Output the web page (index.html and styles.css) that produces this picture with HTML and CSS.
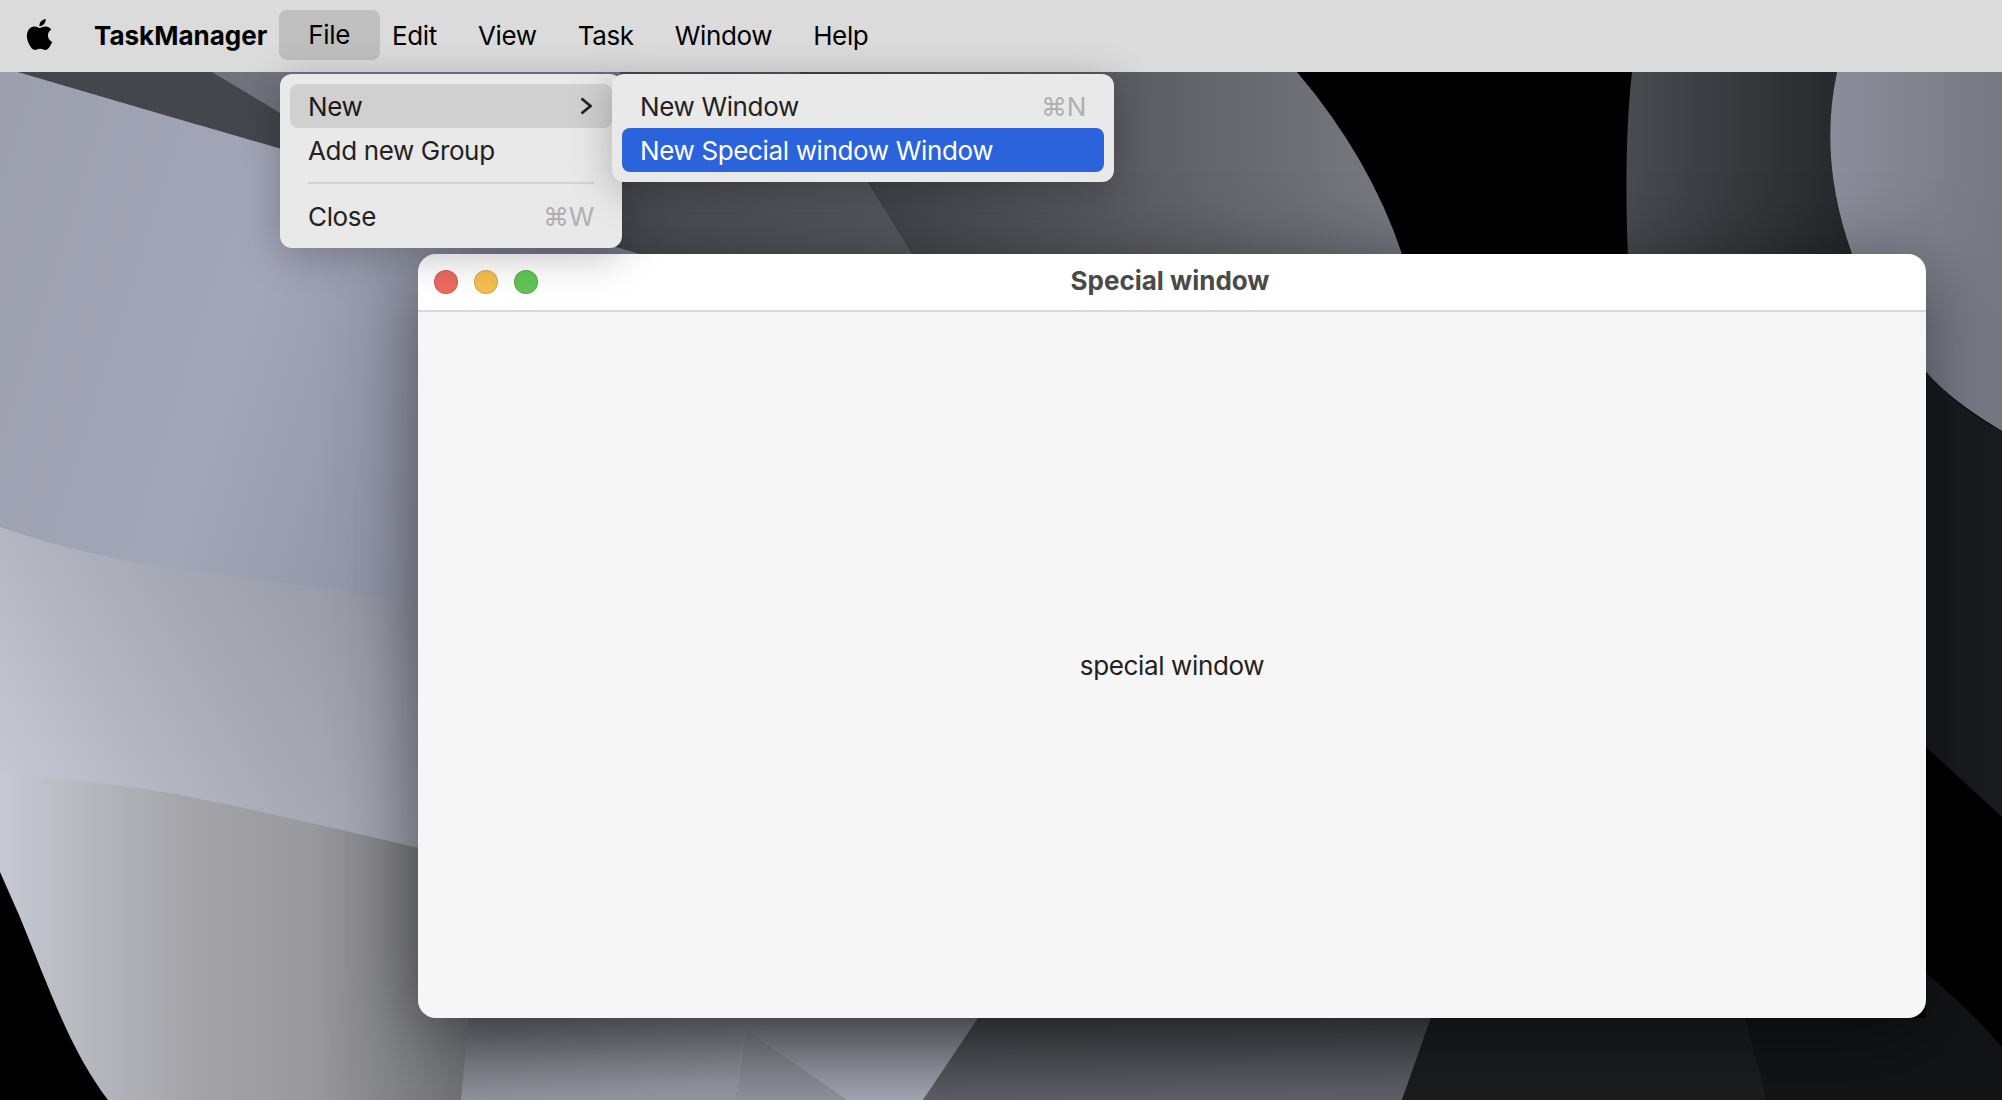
FILE: index.html
```html
<!DOCTYPE html>
<html lang="en">
  <head>
    <meta charset="UTF-8">
    <meta name="viewport" content="width=device-width, initial-scale=1.0">
    <title>TaskManager</title>
    <link rel="stylesheet" href="styles.css">
  </head>
  <body>
    <header class="menu-bar">
      <svg class="apple-logo" viewBox="0 0 24 24"><path d="M12.152 6.896c-.948 0-2.415-1.078-3.96-1.04-2.04.027-3.91 1.183-4.961 3.014-2.117 3.675-.546 9.103 1.519 12.09 1.013 1.454 2.208 3.09 3.792 3.039 1.52-.065 2.09-.987 3.935-.987 1.831 0 2.35.987 3.96.948 1.637-.026 2.676-1.48 3.676-2.948 1.156-1.688 1.636-3.325 1.662-3.415-.039-.013-3.182-1.221-3.22-4.857-.026-3.04 2.48-4.494 2.597-4.559-1.429-2.09-3.623-2.324-4.39-2.376-2-.156-3.675 1.09-4.61 1.09zM15.53 3.83c.843-1.012 1.4-2.427 1.245-3.83-1.207.052-2.662.805-3.532 1.818-.78.896-1.454 2.338-1.273 3.714 1.338.104 2.715-.688 3.559-1.701"/></svg>
      <span class="app-name">TaskManager</span>
      <span class="menu-title menu-title-open">File</span>
      <span class="menu-title">Edit</span>
      <span class="menu-title">View</span>
      <span class="menu-title">Task</span>
      <span class="menu-title">Window</span>
      <span class="menu-title">Help</span>
    </header>

    <main class="desktop">
      <!-- wallpaper -->
      <svg class="wallpaper" viewBox="0 72 2002 1028" preserveAspectRatio="none">
        <defs>
          <linearGradient id="leftTop" x1="0" y1="0" x2="1" y2="0.3">
            <stop offset="0" stop-color="#9d9fae"/>
            <stop offset="0.45" stop-color="#a3a6b7"/>
            <stop offset="1" stop-color="#85879a"/>
          </linearGradient>
          <linearGradient id="leftMid" x1="0" y1="0.7" x2="1" y2="0.4">
            <stop offset="0" stop-color="#c4c7d2"/>
            <stop offset="0.3" stop-color="#acaeba"/>
            <stop offset="0.6" stop-color="#9a9ca8"/>
            <stop offset="1" stop-color="#747680"/>
          </linearGradient>
          <linearGradient id="leftLow" x1="0" y1="0" x2="1" y2="0">
            <stop offset="0" stop-color="#c6c9d3"/>
            <stop offset="0.4" stop-color="#a4a4a8"/>
            <stop offset="0.64" stop-color="#9a9a9e"/>
            <stop offset="1" stop-color="#6c6d71"/>
          </linearGradient>
          <linearGradient id="upperA" x1="0" y1="0" x2="1" y2="0">
            <stop offset="0" stop-color="#4a4b52"/>
            <stop offset="1" stop-color="#5a5b61"/>
          </linearGradient>
          <linearGradient id="upperB" x1="0" y1="0" x2="1" y2="0">
            <stop offset="0" stop-color="#3c3d42"/>
            <stop offset="1" stop-color="#626368"/>
          </linearGradient>
          <linearGradient id="upperC" x1="0" y1="0" x2="1" y2="0">
            <stop offset="0" stop-color="#626368"/>
            <stop offset="1" stop-color="#7a7c85"/>
          </linearGradient>
          <linearGradient id="upperD" x1="0" y1="0" x2="1" y2="0">
            <stop offset="0" stop-color="#4a4b50"/>
            <stop offset="1" stop-color="#1e1f22"/>
          </linearGradient>
          <linearGradient id="upperE" x1="0" y1="0" x2="1" y2="0">
            <stop offset="0" stop-color="#8b8d9a"/>
            <stop offset="1" stop-color="#767883"/>
          </linearGradient>
          <linearGradient id="lowerA" x1="0" y1="0" x2="0.2" y2="1">
            <stop offset="0.18" stop-color="#66676d"/>
            <stop offset="1" stop-color="#92949f"/>
          </linearGradient>
          <linearGradient id="lowerLight" x1="0" y1="0" x2="0" y2="1">
            <stop offset="0.18" stop-color="#707178"/>
            <stop offset="1" stop-color="#a3a6b3"/>
          </linearGradient>
          <linearGradient id="lowerWedge" x1="0" y1="0" x2="0" y2="1">
            <stop offset="0" stop-color="#74757d"/>
            <stop offset="1" stop-color="#8f919c"/>
          </linearGradient>
          <linearGradient id="lowerB" x1="0" y1="0" x2="0.1" y2="1">
            <stop offset="0.18" stop-color="#3c3d41"/>
            <stop offset="1" stop-color="#5e5f66"/>
          </linearGradient>
        </defs>

        <rect x="0" y="72" width="2002" height="1028" fill="#000"/>
        <rect x="200" y="72" width="460" height="200" fill="#70727e"/>
        <path d="M18 72 L212 72 L300 125 L660 72 L660 260 Z" fill="#45464d"/>
        <path d="M620 72 H800 L913 254 L940 300 H620 Z" fill="url(#upperA)"/>
        <path d="M800 72 H1188 V300 H940 L913 254 Z" fill="url(#upperB)"/>
        <path d="M1188 72 H1297 Q1370 158 1402 254 L1420 300 H1188 Z" fill="url(#upperC)"/>
        <path d="M1632 72 Q1622 160 1630 300 H1900 L1852 254 Q1818 160 1837 72 Z" fill="url(#upperD)"/>
        <path d="M1837 72 H2002 V431 Q1950 400 1926 372 L1852 254 Q1818 160 1837 72 Z" fill="url(#upperE)"/>
        <path d="M1926 372 Q1960 410 2002 431 V817 L1926 747 Z" fill="#1a1b1e"/>
        <path d="M1926 973 Q1970 1010 2002 1047 V1100 H1767 L1741 1018 H1926 Z" fill="#131416"/>

        <path d="M0 72 H18 L660 260 V700 H0 Z" fill="url(#leftTop)"/>
        <path d="M0 527 C60 548 120 560 172 569 C260 578 340 590 660 640 V860 H0 Z" fill="url(#leftMid)"/>
        <path d="M0 773 C60 778 130 785 191 797 C280 815 340 830 480 862 V1100 H108 C70 1050 50 990 19 915 L0 872 Z" fill="url(#leftLow)"/>

        <path d="M470 1000 H748 L736 1100 H461 Z" fill="url(#lowerA)"/>
        <path d="M746 1000 H1000 L923 1100 H736 Z" fill="url(#lowerLight)"/>
        <path d="M736 1100 L746 1030 L847 1100 Z" fill="url(#lowerWedge)"/>
        <path d="M990 1000 H1440 L1402 1100 H923 Z" fill="url(#lowerB)"/>
        <path d="M1437 1000 H1740 L1767 1100 H1402 Z" fill="#1b1c1e"/>
      </svg>

      <section class="window">
        <div class="window-titlebar">
          <span class="light light-red"></span>
          <span class="light light-yellow"></span>
          <span class="light light-green"></span>
          <span class="window-title">Special window</span>
        </div>
        <div class="window-body">special window</div>
      </section>
    </main>

    <div class="menu menu-file">
      <div class="menu-row menu-row-open"><span>New</span>
        <svg class="chevron" viewBox="0 0 12 18"><path d="M1.5 1.5 L10.5 9 L1.5 16.5"/></svg>
      </div>
      <div class="menu-row"><span>Add new Group</span></div>
      <div class="menu-separator"></div>
      <div class="menu-row"><span>Close</span><span class="shortcut">⌘W</span></div>
    </div>

    <div class="menu menu-new">
      <div class="menu-row"><span>New Window</span><span class="shortcut">⌘N</span></div>
      <div class="menu-row menu-row-active"><span>New Special window Window</span></div>
    </div>
  </body>
</html>
```

FILE: styles.css
```css
* {
    box-sizing: border-box;
}

body {
    margin: 0;
    height: 1100px;
    display: flex;
    flex-direction: column;
    overflow: hidden;
    font-family: Inter, "Liberation Sans", sans-serif;
    font-size: 26px;
    letter-spacing: -0.36px;
    color: #222;
}

.menu-bar {
    height: 72px;
    display: flex;
    align-items: center;
    padding-bottom: 2px;
    background-color: #dbdbdb;
    color: #000;
}

.apple-logo {
    width: 31px;
    height: 31px;
    margin-left: 24px;
    margin-top: -2px;
}

.app-name {
    margin-left: 39px;
    margin-right: 12px;
    font-weight: 700;
    letter-spacing: 0;
}

.menu-title {
    margin-right: 41px;
}

.menu-title-open {
    height: 50px;
    line-height: 50px;
    padding: 0 30px 0 29px;
    margin-right: 12px;
    background-color: #bfbfbf;
    border-radius: 8px;
}

.desktop {
    position: relative;
    flex: 1;
    background-color: #000;
}

.wallpaper {
    position: absolute;
    top: 0;
    left: 0;
    width: 100%;
    height: 100%;
}

.window {
    position: absolute;
    left: 418px;
    top: 182px;
    width: 1508px;
    height: 764px;
    display: flex;
    flex-direction: column;
    border-radius: 18px;
    overflow: hidden;
    box-shadow: 0 14px 80px rgba(0, 0, 0, 0.5);
}

.window-titlebar {
    position: relative;
    height: 58px;
    display: flex;
    align-items: center;
    padding-left: 16px;
    padding-bottom: 1px;
    gap: 16px;
    background-color: #fff;
    border-bottom: 2px solid #dadada;
}

.light {
    width: 24px;
    height: 24px;
    border-radius: 50%;
    border: 1px solid rgba(0, 0, 0, 0.12);
}

.light-red {
    background-color: #ec6a5e;
}

.light-yellow {
    background-color: #f4bf4f;
}

.light-green {
    background-color: #61c554;
}

.window-title {
    position: absolute;
    left: 0;
    right: 4px;
    top: 11px;
    text-align: center;
    font-weight: 700;
    letter-spacing: 0;
    color: #4a4a4a;
}

.window-body {
    flex: 1;
    display: flex;
    align-items: center;
    justify-content: center;
    background-color: #f6f6f6;
}

.menu {
    position: absolute;
    top: 74px;
    padding: 10px;
    background-color: #e9e9e9;
    border-radius: 12px;
    box-shadow: 0 8px 40px rgba(0, 0, 0, 0.25);
}

.menu-file {
    left: 280px;
    width: 342px;
    height: 174px;
}

.menu-new {
    left: 612px;
    width: 502px;
    height: 108px;
}

.menu-row {
    height: 44px;
    display: flex;
    align-items: center;
    justify-content: space-between;
    padding: 0 18px;
    border-radius: 8px;
}

.menu-row-open {
    background-color: #d0d0d0;
    color: #1a1a1a;
}

.menu-row-active {
    background-color: #2b63dc;
    color: #fff;
}

.menu-separator {
    height: 2px;
    margin: 10px 18px 10px;
    background-color: #d2d2d2;
}

.shortcut {
    color: #b0b0b0;
}

.chevron {
    width: 12px;
    height: 18px;
    margin-right: 2px;
    fill: none;
    stroke: #222;
    stroke-width: 2.8;
}
```
